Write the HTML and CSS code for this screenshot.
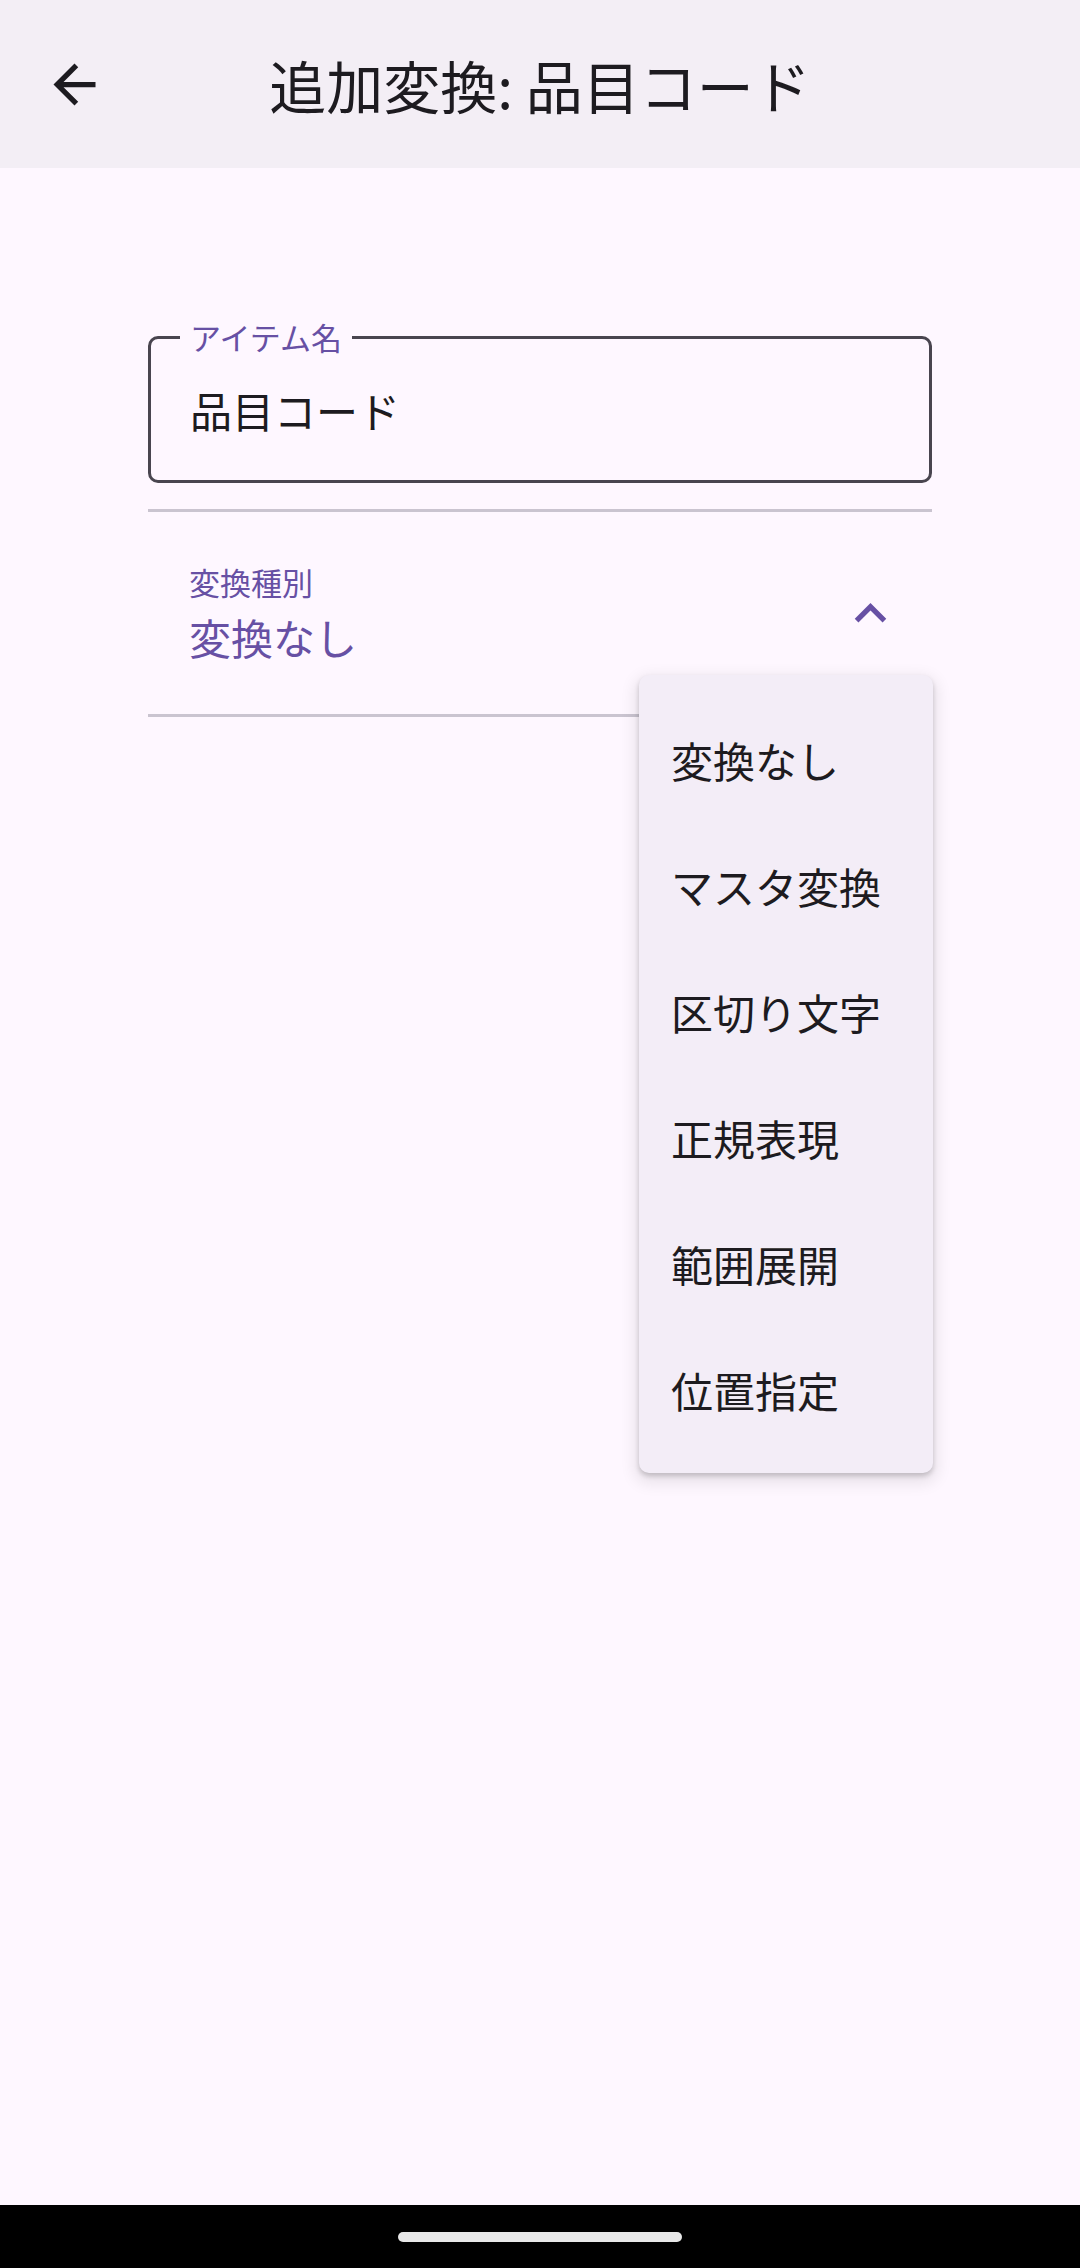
FILE: index.html
```html
<!DOCTYPE html>
<html lang="ja">
<head>
<meta charset="utf-8">
<title>追加変換: 品目コード</title>
<link rel="stylesheet" href="styles.css">
</head>
<body>
<div class="screen">
  <header class="appbar">
    <button class="icon-btn back" aria-label="戻る">
      <svg viewBox="0 0 24 24" width="63" height="63"><path d="M20 11H7.83l5.59-5.59L12 4l-8 8 8 8 1.41-1.41L7.83 13H20v-2z"/></svg>
    </button>
    <h1 class="title">追加変換: 品目コード</h1>
    <span class="spacer"></span>
  </header>

  <main class="content">
    <fieldset class="field">
      <legend class="field-label">アイテム名</legend>
      <div class="field-value">品目コード</div>
    </fieldset>

    <div class="divider divider-top"></div>

    <div class="dropdown">
      <div class="dropdown-row">
        <div class="dropdown-text">
          <div class="dropdown-label">変換種別</div>
          <div class="dropdown-value">変換なし</div>
        </div>
        <svg class="chevron" viewBox="0 0 24 24" width="63" height="63"><path d="M12 8l-6 6 1.41 1.41L12 10.83l4.59 4.58L18 14z"/></svg>
      </div>
      <div class="divider"></div>

      <ul class="menu">
        <li class="menu-item">変換なし</li>
        <li class="menu-item">マスタ変換</li>
        <li class="menu-item">区切り文字</li>
        <li class="menu-item">正規表現</li>
        <li class="menu-item">範囲展開</li>
        <li class="menu-item">位置指定</li>
      </ul>
    </div>
  </main>

  <footer class="navbar">
    <div class="pill"></div>
  </footer>
</div>
</body>
</html>
```

FILE: styles.css
```css
* { box-sizing: border-box; }

html, body {
  margin: 0;
  padding: 0;
}

body {
  background: #fef7ff;
  font-family: "Noto Sans CJK JP", "Noto Sans", sans-serif;
  color: #1d1b20;
}

.screen {
  width: 1080px;
  height: 2268px;
  display: flex;
  flex-direction: column;
  overflow: hidden;
}

.appbar {
  height: 168px;
  flex: none;
  background: #f3eef5;
  display: grid;
  grid-template-columns: 1fr auto 1fr;
  align-items: center;
}

.icon-btn {
  border: 0;
  background: none;
  padding: 0;
  margin: 0 0 0 43px;
  width: 63px;
  height: 63px;
  justify-self: start;
  display: flex;
}

.icon-btn svg { fill: #1d1b20; }

.title {
  margin: 0;
  font-size: 57px;
  font-weight: 400;
  line-height: 80px;
  color: #1d1b20;
  white-space: nowrap;
}

.content {
  flex: 1;
  padding: 153px 148px 0 148px;
}

.field {
  margin: 0;
  padding: 0 29px 42px 29px;
  border: 3px solid #49454f;
  border-radius: 10px;
}

.field-label {
  padding: 0 10px;
  font-size: 31px;
  line-height: 32px;
  color: #6750a4;
}

.field-value {
  margin: 29px 0 0 10px;
  font-size: 42px;
  line-height: 56px;
  color: #1d1b20;
}

.divider {
  height: 3px;
  background: #cac4d0;
}

.divider-top { margin-top: 26px; }

.dropdown {
  position: relative;
}

.dropdown-row {
  display: flex;
  align-items: center;
  justify-content: space-between;
  padding: 49px 30px 49px 41px;
}

.dropdown-label {
  font-size: 31px;
  line-height: 42px;
  color: #6750a4;
}

.dropdown-value {
  margin-top: 6px;
  font-size: 42px;
  line-height: 56px;
  color: #6750a4;
}

.chevron { fill: #6750a4; flex: none; }

.menu {
  position: absolute;
  top: 163px;
  right: -1px;
  width: 294px;
  margin: 0;
  padding: 21px 0;
  list-style: none;
  background: #f3edf7;
  border-radius: 10px;
  box-shadow: 0 3px 5px rgba(0, 0, 0, 0.18), 0 6px 16px 4px rgba(0, 0, 0, 0.09);
}

.menu-item {
  height: 126px;
  display: flex;
  align-items: center;
  padding-left: 32px;
  font-size: 42px;
  color: #1d1b20;
}

.navbar {
  height: 63px;
  flex: none;
  background: #000;
  display: flex;
  justify-content: center;
  padding-top: 27px;
}

.pill {
  width: 284px;
  height: 10px;
  border-radius: 5px;
  background: #e8e8e8;
}
```
